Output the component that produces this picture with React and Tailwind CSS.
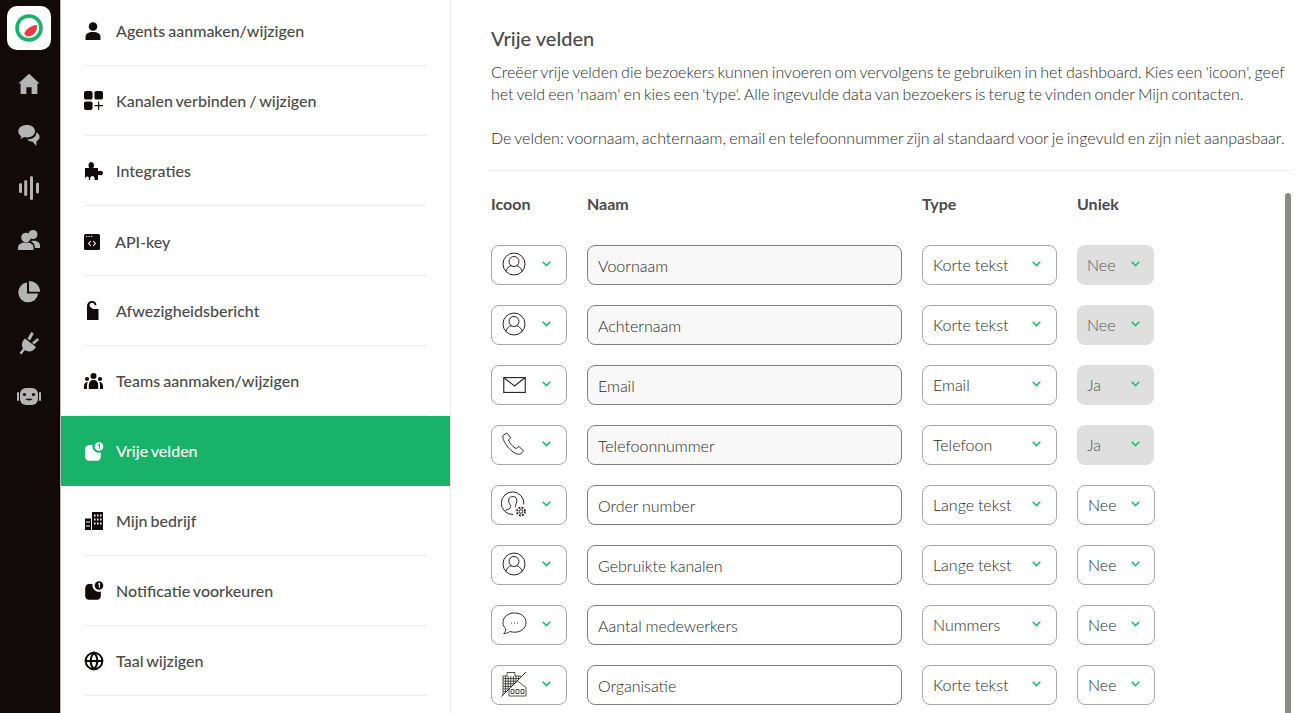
import { Globe } from "lucide-react";

const HomeIcon = () => (
  <svg viewBox="0 0 22 22" className="w-[22px] h-[22px] fill-[#b4b4b4]">
    <path d="M11 .8 21.600 10.400 19.400 10.400 19.400 21 13.600 21 13.600 14.200 8.400 14.200 8.400 21 2.600 21 2.600 10.400.4 10.400Z" />
  </svg>
);

const ChatIcon = () => (
  <svg viewBox="0 0 22 22" className="w-[22px] h-[22px] fill-[#b4b4b4]">
    <path d="M9 0C4 0 .3 2.700.3 6.300c0 2 1.100 3.700 3 4.900L2.600 14l3.600-1.900c.8.200 1.700.3 2.600.3 4.800 0 8.200-2.700 8.200-6.200S13.800 0 9 0Z" />
    <path d="M18.400 7.200c.3 4-3.500 7.300-9.200 7.100 1 1.500 3 2.400 5.300 2.300l3.700 4.400.4-4.900c2-1 3-2.500 3-4.200 0-1.900-1.300-3.700-3.200-4.700Z" />
  </svg>
);

const WaveIcon = () => (
  <svg viewBox="0 0 20 24" className="w-[20px] h-[24px] fill-[#b4b4b4]">
    <rect x="0" y="7" width="3" height="10" rx="1.500" />
    <rect x="5.200" y="4" width="3" height="16" rx="1.500" />
    <rect x="11" y="0" width="3" height="24" rx="1.500" />
    <rect x="17" y="6.500" width="3" height="11" rx="1.500" />
  </svg>
);

const UsersIcon = () => (
  <svg viewBox="0 0 22 20" className="w-[22px] h-[20px] fill-[#b4b4b4]">
    <circle cx="8" cy="7.500" r="4.800" />
    <path d="M0 20v-2.500C0 14.500 3 12.500 8 12.500s7.500 2 7.500 5V20Z" />
    <circle cx="15" cy="4.500" r="4.500" />
    <path d="M13 11.200c3.500-1.200 9 0 9 4.300V18h-5c0-3-1.500-5.300-4-6.800Z" />
  </svg>
);

const PieIcon = () => (
  <svg viewBox="0 0 22 22" className="w-[22px] h-[22px] fill-[#b4b4b4]">
    <path d="M9.600 1.600v11.200h11.200A10 10 0 1 1 9.600 1.600Z" transform="translate(-.6 -.2)" />
    <path d="M11 0a10.800 10.800 0 0 1 11 10.800H11Z" />
  </svg>
);

const PlugIcon = () => (
  <svg viewBox="0 0 20 23" className="w-[20px] h-[23px] -mt-[1px] fill-[#b4b4b4]">
    <path d="M6 6.500 17 15C14 20 9 20.500 6 18L2.300 22.500.5 21 4 16.500C2 13.500 3 9 6 6.500Z" />
    <path d="M8.500 6.500 12.300 0 14.800 1.500 11 8.500Z" />
    <path d="M13 10.500 18.500 6 20 8 15 12.500Z" />
  </svg>
);

const BotIcon = () => (
  <svg viewBox="0 0 24 17" className="w-[24px] h-[17px]">
    <rect x="3" y="0" width="18" height="17" rx="6" fill="#b4b4b4" />
    <rect x="0" y="4" width="2" height="9" rx="1" fill="#b4b4b4" />
    <rect x="22" y="4" width="2" height="9" rx="1" fill="#b4b4b4" />
    <circle cx="7.500" cy="6.500" r="1.600" fill="#120a09" />
    <circle cx="16.500" cy="6.500" r="1.600" fill="#120a09" />
    <path d="M8.500 10.800h7c-.6 2.200-6.400 2.200-7 0Z" fill="#120a09" />
  </svg>
);

const UserIcon = () => (
  <svg viewBox="0 0 16 18" className="w-[16px] h-[18px] ml-[1px] fill-[#120a09]">
    <circle cx="8" cy="4.500" r="4.300" />
    <path d="M.5 18v-3C.5 11.500 3.500 10 8 10s7.500 1.500 7.500 5v3Z" />
  </svg>
);

const ChannelsIcon = () => (
  <svg viewBox="0 0 20 20" className="w-[19px] h-[19px] fill-[#120a09]">
    <rect x="0" y="0" width="9" height="9" rx="2" />
    <rect x="11" y="0" width="9" height="9" rx="2" />
    <rect x="0" y="11" width="9" height="9" rx="2" />
    <path d="M14.800 11h1.200v3.800H20v1.200h-4v4h-1.200v-4H11v-1.200h3.800Z" />
  </svg>
);

const PuzzleIcon = () => (
  <svg viewBox="0 0 18 18" className="w-[18px] h-[18px] ml-[1px] fill-[#120a09]">
    <path d="M0 18V6h4.200C3.800 5 3.500 4.300 3.500 3.200 3.500 1.300 4.600 0 6.200 0S9 1.300 9 3.200C9 4.300 8.600 5 8.200 6H13v3.300c1.600-1 5-.9 5 1.700s-3.400 2.700-5 1.700V18H9.600c.5-3-.9-4-2.200-4s-2.700 1-2.200 4H3.800c.5-2.500-.4-3.600-1.600-3.600S0 15.500 0 18Z" />
  </svg>
);

const ApiIcon = () => (
  <svg viewBox="0 0 16 16" className="w-[16px] h-[16px]">
    <rect width="16" height="16" rx="1.500" fill="#120a09" />
    <path d="M2 2.500h1.200M4.500 2.500h1.200M7 2.500h1.200" stroke="#fff" strokeWidth="1.100" />
    <path d="M6.800 7 4.600 9.500 6.800 12M9.200 7l2.200 2.500-2.200 2.500" stroke="#fff" strokeWidth="1.100" fill="none" />
  </svg>
);

const HangerIcon = () => (
  <svg viewBox="0 0 12 19" className="w-[12px] h-[19px] ml-[3px] fill-[#120a09]">
    <path fillRule="evenodd" d="M0 19V5.500C0 2 2.200 0 5 0c2.500 0 4.500 1.600 4.500 4.200H7.700C7.700 2.600 6.500 1.700 5 1.700c-1.300 0-2.400 1-2.400 2.600 0 1.500 1 2.300 2.400 2.700L5.700 8H11.500v11Z" />
  </svg>
);

const TeamsIcon = () => (
  <svg viewBox="0 0 19 16" className="w-[19px] h-[16px] fill-[#120a09]">
    <circle cx="9.500" cy="3" r="3" />
    <path d="M4.800 16v-3.500C4.800 9 6.800 7 9.500 7s4.700 2 4.700 5.500V16Z" />
    <circle cx="3" cy="6" r="2.100" />
    <path d="M0 16v-2.800C0 10.800 1.300 9 3.800 9c-.5 1-.8 2.100-.8 3.500V16Z" />
    <circle cx="16" cy="6" r="2.100" />
    <path d="M19 16v-2.800C19 10.800 17.700 9 15.200 9c.5 1 .8 2.100.8 3.500V16Z" />
  </svg>
);

const BadgeIcon = ({ dark }) => (
  <svg viewBox="0 0 19 19" className="w-[19px] h-[19px] ml-[1px]">
    <path d="M7.500 3H4C1.800 3 .2 4.800 .2 7v8c0 2.200 1.800 3.800 3.800 3.800h8c2.200 0 3.800-1.700 3.800-3.800v-4.500a6.500 6.500 0 0 1-8.300-7.500Z" fill={dark ? "#120a09" : "#fff"} />
    <circle cx="14" cy="4.500" r="4.300" fill={dark ? "#120a09" : "#fff"} />
    <path d="M13.200 3.300 14.400 2.500V6.700" stroke={dark ? "#fff" : "#18b368"} strokeWidth="1.100" fill="none" />
  </svg>
);

const BuildingIcon = () => (
  <svg viewBox="0 0 18 18" className="w-[18px] h-[18px] ml-[1px] fill-[#120a09]">
    <path fillRule="evenodd" d="M0 6.500h6V18H0ZM1.500 9v2h1V9Zm2 0v2h1V9ZM1.500 13v2h1v-2Zm2 0v2h1v-2Z" />
    <path fillRule="evenodd" d="M7 0h11v18H7ZM9 2.500v2h1.500v-2Zm3 0v2h1.500v-2Zm3 0v2h1.500v-2ZM9 6.500v2h1.500v-2Zm3 0v2h1.500v-2Zm3 0v2h1.500v-2ZM9 10.500v2h1.500v-2Zm3 0v2h1.500v-2Zm3 0v2h1.500v-2Z" />
  </svg>
);

const rowStroke = "fill-none stroke-[#2b2523] stroke-[1]";

const PersonRound = () => (
  <svg viewBox="0 0 24 24" className={`w-[24px] h-[24px] ${rowStroke}`}>
    <circle cx="12" cy="12" r="11" />
    <circle cx="12" cy="9.500" r="5" />
    <path d="M3.800 19.400c1.200-3.800 3.500-5.300 5.700-5.800M20.200 19.400c-1.200-3.800-3.500-5.300-5.700-5.800" />
  </svg>
);

const MailIcon = () => (
  <svg viewBox="0 0 24 17" className={`w-[23px] h-[16px] translate-y-px ${rowStroke}`}>
    <rect x=".6" y=".6" width="22.800" height="15.800" strokeWidth="1.200" />
    <path d="M.6.600 12 9.500 23.400.6" strokeWidth="1.200" />
  </svg>
);

const PhoneIcon = () => (
  <svg viewBox="0 0 24 24" className={`w-[23px] h-[23px] -translate-x-px ${rowStroke}`}>
    <path d="M5 1 1.700 3.200C.5 4.200.7 6 1.500 8c2.500 6 7.500 11.800 12.500 14.300 2.400 1.100 4.500 1.200 5.700.2l3-2.800-5.200-4.700-2.800 2.300c-3-1.200-6.800-5.600-8-9l2.500-2.300Z" />
  </svg>
);

const PersonGear = () => (
  <svg viewBox="0 0 26 26" className={`w-[26px] h-[26px] ${rowStroke}`}>
    <path d="M22.800 13.500A11.300 11.300 0 1 0 12 23.500" />
    <path d="M8 18c1.500-1 2-2 1.500-3.500C7.800 12 7.200 9.500 8 7.500c1-2.600 6.500-2.600 7.500 0 .6 1.800.3 4.500-1 6.700-.4 1 0 1.800.5 2.300" />
    <path d="M4.500 19.800c1-1 2-1.500 3.500-1.800" />
    <circle cx="20" cy="20.500" r="1.800" />
    <circle cx="20" cy="20.500" r="4" strokeWidth="1.800" strokeDasharray="2 1.150" />
  </svg>
);

const BubbleIcon = () => (
  <svg viewBox="0 0 26 24" className={`w-[25px] h-[23px] ${rowStroke}`}>
    <path d="M13 1C6 1 1 5.300 1 11c0 2.700 1 4.900 3 6.600-.2 2-1 3.600-2.300 4.800 2.800 0 5-.7 6.600-2.100 1.500.5 3 .8 4.700.8 7 0 12-4.300 12-10.100S20 1 13 1Z" />
    <path d="M9.500 11.500h1M12.500 11.500h1M15.500 11.500h1" />
  </svg>
);

const OrgIcon = () => (
  <svg viewBox="0 0 26 26" className="w-[26px] h-[26px] fill-none stroke-[#2b2523] stroke-[.8]">
    <path d="M2 24V5H6V1.500H14V5H20" />
    <path d="M4.600 5V21M7.200 5V18.300M9.800 5V15.700M12.400 5V13.100M15 5V10.500M17.600 5V7.900M2 7.600H17.900M2 10.200H15.300M2 12.800H12.700M2 15.400H10.100M2 18H7.500M2 20.600H4.900" />
    <path d="M.5 25.500 25 1" strokeWidth="1" />
    <path d="M8 25V18L16.500 10 25 16.500V25Z" />
    <path d="M10 18.500h3v4h-3ZM15 18.500h3v4h-3ZM20 18.500h3v4h-3Z" />
  </svg>
);

const sideIcons = [HomeIcon, ChatIcon, WaveIcon, UsersIcon, PieIcon, PlugIcon, BotIcon];

const menu = [
  { label: "Agents aanmaken/wijzigen", icon: <UserIcon /> },
  { label: "Kanalen verbinden / wijzigen", icon: <ChannelsIcon /> },
  { label: "Integraties", icon: <PuzzleIcon /> },
  { label: "API-key", icon: <ApiIcon /> },
  { label: "Afwezigheidsbericht", icon: <HangerIcon /> },
  { label: "Teams aanmaken/wijzigen", icon: <TeamsIcon /> },
  { label: "Vrije velden", icon: <BadgeIcon />, active: true },
  { label: "Mijn bedrijf", icon: <BuildingIcon /> },
  { label: "Notificatie voorkeuren", icon: <BadgeIcon dark /> },
  { label: "Taal wijzigen", icon: <Globe className="w-[20px] h-[20px] text-[#120a09]" strokeWidth={2.4} /> },
];

const rows = [
  { icon: <PersonRound />, name: "Voornaam", type: "Korte tekst", unique: "Nee", locked: true },
  { icon: <PersonRound />, name: "Achternaam", type: "Korte tekst", unique: "Nee", locked: true },
  { icon: <MailIcon />, name: "Email", type: "Email", unique: "Ja", locked: true },
  { icon: <PhoneIcon />, name: "Telefoonnummer", type: "Telefoon", unique: "Ja", locked: true },
  { icon: <PersonGear />, name: "Order number", type: "Lange tekst", unique: "Nee" },
  { icon: <PersonRound />, name: "Gebruikte kanalen", type: "Lange tekst", unique: "Nee" },
  { icon: <BubbleIcon />, name: "Aantal medewerkers", type: "Nummers", unique: "Nee" },
  { icon: <OrgIcon />, name: "Organisatie", type: "Korte tekst", unique: "Nee" },
];

const Chevron = () => (
  <svg viewBox="0 0 9 6" className="w-[9px] h-[6px] shrink-0 -mt-[2px] fill-none stroke-[#1fbf6c] stroke-[1.6]">
    <path d="M.7.8 4.500 4.600 8.300.8" />
  </svg>
);

export default function App() {
  return (
    <div className="flex h-[713px] w-[1305px] overflow-hidden bg-white font-['Lato',sans-serif] text-[#4a4a4a]">
      {/* donkere zijbalk */}
      <aside className="w-[60px] shrink-0 bg-[#120a09] flex flex-col items-center pt-[6px] pr-[2px]">
        <div className="w-[44px] h-[44px] rounded-[10px] bg-white flex items-center justify-center">
          <svg viewBox="0 0 28 28" className="w-[28px] h-[28px]">
            <circle cx="14" cy="14" r="12" fill="none" stroke="#18b368" strokeWidth="3.600" />
            <path d="M9.300 19.500C11 15 16 11.500 21.800 11 22.500 16 20 20.500 15.500 22 13 23 10.500 22 9.300 19.500Z" fill="#f2383f" />
          </svg>
        </div>
        <div className="mt-[8px] flex flex-col items-center">
          {sideIcons.map((Icon, i) => (
            <div key={i} className="h-[52px] flex items-center justify-center">
              <Icon />
            </div>
          ))}
        </div>
      </aside>

      {/* instellingen menu */}
      <nav className="w-[391px] shrink-0 border-l border-l-[#b9b9bd] border-r border-r-[#e8e8e8] -mt-[4px]">
        {menu.map((item) => (
          <div key={item.label} className={item.active ? "bg-[#18b368]" : "px-[23px]"}>
            <div
              className={
                "h-[70px] flex items-center text-[16px] font-medium [word-spacing:-1px] " +
                (item.active
                  ? "px-[23px] text-white"
                  : "text-[#4a4a4a] border-b border-b-[#ececec]") +
                (item.label === "API-key" ? " pt-[2px]" : "")
              }
            >
              <div className="w-[32px] shrink-0 flex items-center">{item.icon}</div>
              <span className={item.label === "API-key" ? "-ml-[1px]" : ""}>{item.label}</span>
            </div>
          </div>
        ))}
      </nav>

      {/* vrije velden */}
      <main className="relative flex-1 min-w-0 pl-[40px] pr-[14px] pt-[25px]">
        <h1 className="text-[20px] leading-[26px] font-medium text-[#4a4a4a]">Vrije velden</h1>
        <p className="mt-[10px] text-[16px] leading-[22px] font-light text-[#2a2a2a] [word-spacing:-1.1px] whitespace-nowrap">
          Creëer vrije velden die bezoekers kunnen invoeren om vervolgens te gebruiken in het dashboard. Kies een 'icoon', geef
          <br />
          het veld een 'naam' en kies een 'type'. Alle ingevulde data van bezoekers is terug te vinden onder Mijn contacten.
          <br />
          <br />
          De velden: voornaam, achternaam, email en telefoonnummer zijn al standaard voor je ingevuld en zijn niet aanpasbaar.
        </p>
        <div className="mt-[21px] h-px bg-[#e8e8e8]" />

        <div className="mt-[22px] flex gap-[20px] text-[16px] leading-[22px] font-bold text-[#4a4a4a]">
          <div className="w-[76px]">Icoon</div>
          <div className="w-[315px]">Naam</div>
          <div className="w-[135px]">Type</div>
          <div className="w-[78px]">Uniek</div>
        </div>

        <div className="mt-[30px] flex flex-col gap-[20px]">
          {rows.map((row, i) => (
            <div key={i} className="flex gap-[20px] text-[16px] font-light text-[#2a2a2a] [word-spacing:-0.5px]">
              <div className="w-[76px] h-[40px] shrink-0 rounded-[8px] border border-[#a8a8a8] flex items-center">
                <div className="w-[46px] -ml-[1px] mr-[5px] flex justify-center -mt-[3px]">{row.icon}</div>
                <Chevron />
              </div>
              <div
                className={
                  "w-[315px] h-[40px] shrink-0 rounded-[8px] border border-[#808080] flex items-center px-[10px] " +
                  (row.locked ? "bg-[#f8f8f8]" : "bg-white")
                }
              >
                <span className="mt-[2px]">{row.name}</span>
              </div>
              <div className="w-[135px] h-[40px] shrink-0 rounded-[8px] border border-[#a8a8a8] flex items-center justify-between pl-[10px] pr-[15px]">
                <span>{row.type}</span>
                <Chevron />
              </div>
              <div
                className={
                  "h-[40px] shrink-0 rounded-[8px] flex items-center justify-between pr-[14px] " +
                  (row.locked ? "w-[77px] pl-[10px] bg-[#dfdfdf] text-[#555]" : "w-[78px] pl-[10px] border border-[#a8a8a8]")
                }
              >
                <span>{row.unique}</span>
                <Chevron />
              </div>
            </div>
          ))}
        </div>

        <div className="absolute right-[14px] top-[193px] bottom-0 w-[6px] rounded-t-[3px] bg-[#8c8884]" />
      </main>
    </div>
  );
}
